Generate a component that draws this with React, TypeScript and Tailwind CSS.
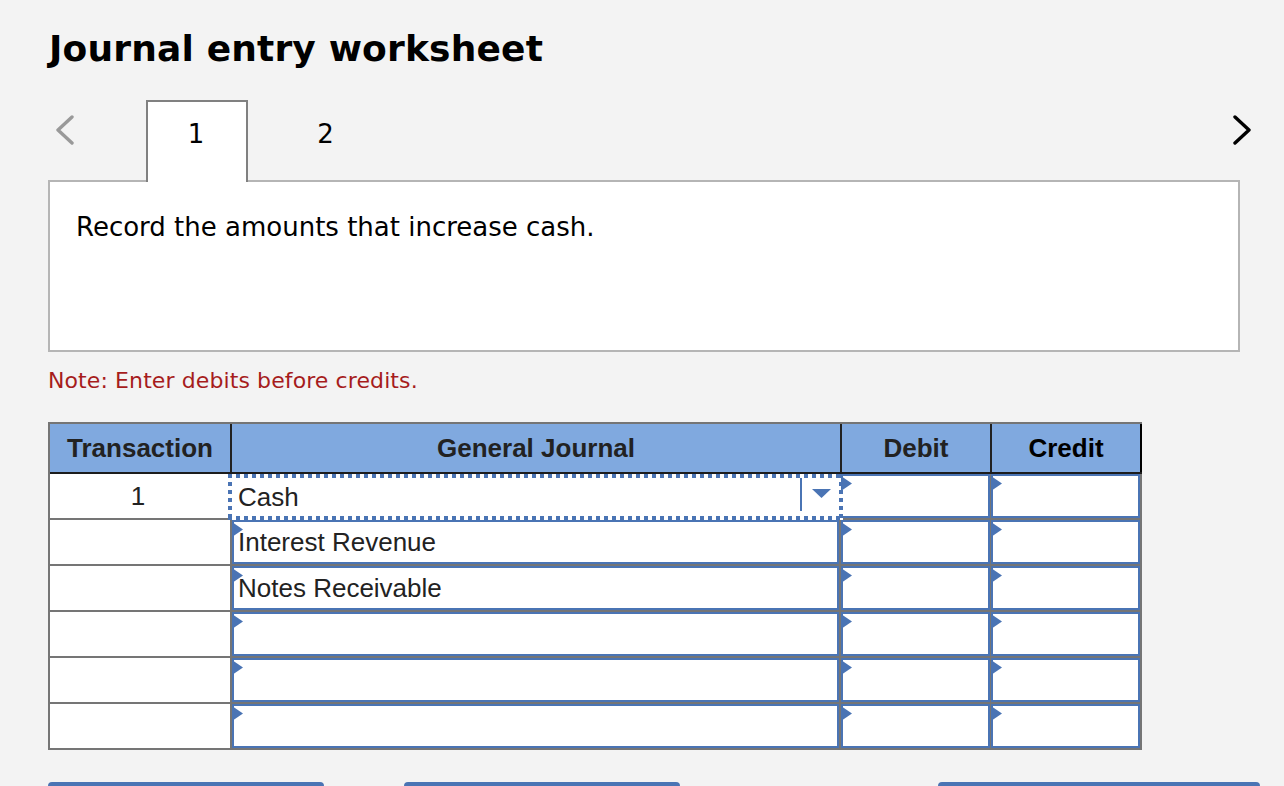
const verdana = "font-['DejaVu_Sans',sans-serif]";

function Cell({ text, className, marker = true }: { text?: string; className: string; marker?: boolean }) {
  return (
    <div className={`border-b-2 border-[#757575] ${className}`}>
      <div className="relative flex h-full items-center border-2 border-[#4a74b4] bg-white pl-[4px] text-[26px] text-[#222]">
        {marker && (
          <span className="absolute -left-[2px] top-0 z-10 h-[15px] w-[11px] bg-[#4a74b4] [clip-path:polygon(0_0,100%_50%,0_100%)]" />
        )}
        {text}
      </div>
    </div>
  );
}

function Row({ n, text, first }: { n?: string; text?: string; first?: boolean }) {
  return (
    <div className="flex h-[46px]">
      <div className="flex w-[182px] items-center justify-center border-b-2 border-r-2 border-[#757575] bg-white pr-[4px] text-[26px] text-[#222]">{n}</div>
      <Cell text={text} marker={!first} className="w-[609px] border-r-2" />
      <Cell className="w-[150px] border-r" />
      <Cell className="w-[149px]" />
    </div>
  );
}

export default function App() {
  return (
    <div className={`h-[786px] w-[1284px] overflow-hidden bg-[#f3f3f3] ${verdana}`}>
      <h1 className="pl-[49px] pt-[26px] text-[36px] font-bold leading-[46px] tracking-[0.17px] text-black">Journal entry worksheet</h1>

      <div className="relative z-10 mt-[28px] flex h-[82px] items-start pl-[48px] pr-[32px]">
        <div className="flex h-[60px] w-[98px] items-center pl-[7px]">
          <svg width="20" height="30" viewBox="0 0 20 30" fill="none" stroke="#999" strokeWidth="3.4" strokeLinecap="round" strokeLinejoin="round"><path d="M17 2 L3 15 L17 28" /></svg>
        </div>
        <div className="flex h-[82px] w-[102px] items-center justify-center border-2 border-b-0 border-[#808080] bg-white pb-[16px] pr-[2px] text-[26px] text-black">1</div>
        <div className="flex h-[68px] w-[154px] items-center justify-center pl-[1px] text-[26px] text-black">2</div>
        <div className="flex-1" />
        <div className="flex h-[60px] items-center">
          <svg width="20" height="30" viewBox="0 0 20 30" fill="none" stroke="#000" strokeWidth="3.4" strokeLinecap="round" strokeLinejoin="round"><path d="M3 2 L17 15 L3 28" /></svg>
        </div>
      </div>

      <div className="mx-[48px] -mt-[2px] h-[172px] w-[1192px] border-2 border-[#b5b5b5] bg-white pl-[26px] pt-[28px] text-[26px] leading-[34px] text-black">
        Record the amounts that increase cash.
      </div>

      <p className="ml-[48px] mt-[16px] text-[22px] leading-[26px] tracking-[0.1px] text-[#a61c1c]">Note: Enter debits before credits.</p>

      <div className="ml-[48px] mt-[28px] w-[1094px] border-2 border-b-0 border-[#757575] font-['Liberation_Sans',sans-serif]">
        <div className="-mr-[2px] flex h-[50px] border-b-2 border-[#1c1c1c] bg-[#80a9df] text-[26px] font-bold">
          <div className="flex w-[182px] items-center justify-center border-r-2 border-[#222] text-[#222]">Transaction</div>
          <div className="flex w-[610px] items-center justify-center border-r-2 border-[#222] text-[#222]">General Journal</div>
          <div className="flex w-[150px] items-center justify-center border-r-2 border-[#222] text-[#222]">Debit</div>
          <div className="flex flex-1 items-center justify-center border-r-2 border-black text-black">Credit</div>
        </div>
        <div className="relative">
          <Row n="1" text="Cash" first />
          <Row text="Interest Revenue" />
          <Row text="Notes Receivable" />
          <Row />
          <Row />
          <Row />
          <div className="absolute left-[178px] top-0 flex h-[46px] w-[615px] bg-white pl-[10px] text-[26px] text-[#222]">
            <span className="absolute inset-x-0 top-0 h-[4px] bg-[repeating-linear-gradient(90deg,#4a74b4_0_4px,transparent_4px_8px)]" />
            <span className="absolute inset-x-0 bottom-0 h-[4px] bg-[repeating-linear-gradient(90deg,#4a74b4_0_4px,transparent_4px_8px)]" />
            <span className="absolute inset-y-0 left-0 w-[4px] bg-[repeating-linear-gradient(180deg,#4a74b4_0_4px,transparent_4px_8px)]" />
            <span className="absolute inset-y-0 right-0 w-[4px] bg-[repeating-linear-gradient(180deg,#4a74b4_0_4px,transparent_4px_8px)]" />
            <span className="flex flex-1 items-center">Cash</span>
            <span className="mr-[12px] mt-[4px] flex h-[33px] w-[31px] items-start justify-end border-l-2 border-[#4a74b4] pt-[11px]">
              <svg width="19" height="9" viewBox="0 0 19 9" fill="#4a74b4"><path d="M0 0 H19 L9.5 9 Z" /></svg>
            </span>
          </div>
        </div>
      </div>

      <div className="ml-[48px] mt-[32px] flex">
        <div className="h-[8px] w-[276px] rounded-t-[4px] bg-[#4a74b4]" />
        <div className="ml-[80px] h-[8px] w-[276px] rounded-t-[4px] bg-[#4a74b4]" />
        <div className="ml-[258px] h-[8px] w-[322px] rounded-t-[4px] bg-[#4a74b4]" />
      </div>
    </div>
  );
}
